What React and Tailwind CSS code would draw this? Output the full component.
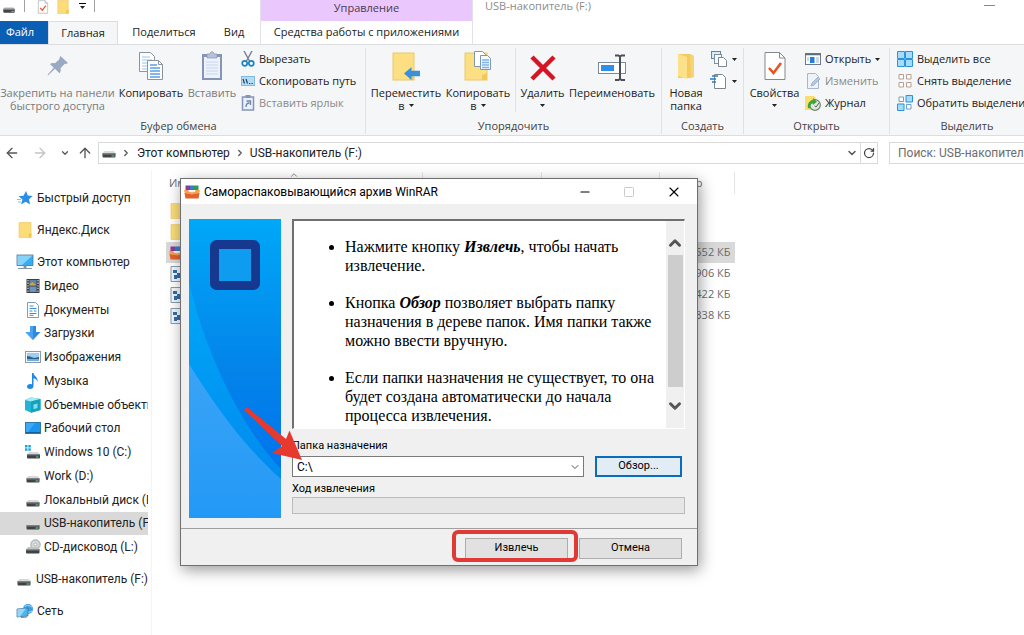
import React, { useState } from "react";
import { ArrowLeft, ArrowRight, ArrowUp, ChevronDown, ChevronRight, ChevronUp, Minus, RotateCw, Square, X } from "lucide-react";

/* ---------- icons ---------- */

const DriveIcon = ({ className = "w-4 h-4" }) => (
    <svg viewBox="0 0 16 16" className={className}>
        <path d="M3 8h10l1.500 2.500h-13z" fill="#d9d9d9" />
        <rect x="1.500" y="10" width="13" height="4.500" rx="1" fill="#3f4345" />
        <rect x="1.500" y="10" width="13" height="1.500" fill="#7c8285" />
        <rect x="10.500" y="12.500" width="3" height="1" fill="#6fd08c" />
    </svg>
);

const WindowsDriveIcon = () => (
    <svg viewBox="0 0 16 16" className="w-4 h-4">
        <g fill="#19a4e6">
            <rect x="0" y="1" width="2.500" height="2.500" /><rect x="3.300" y="1" width="2.500" height="2.500" />
            <rect x="0" y="4.300" width="2.500" height="2.500" /><rect x="3.300" y="4.300" width="2.500" height="2.500" />
        </g>
        <path d="M4 8h9l2 2.500H2z" fill="#d9d9d9" />
        <rect x="2" y="10" width="13" height="4.500" rx="1" fill="#3f4345" />
        <rect x="2" y="10" width="13" height="1.300" fill="#7c8285" />
        <rect x="11" y="12.500" width="2.500" height="1" fill="#6fd08c" />
    </svg>
);

const CdDriveIcon = () => (
    <svg viewBox="0 0 16 16" className="w-4 h-4">
        <circle cx="10.500" cy="5.500" r="4.700" fill="#d4d8d8" stroke="#8f9696" strokeWidth=".8" />
        <circle cx="10.500" cy="5.500" r="1.400" fill="#fff" stroke="#8f9696" strokeWidth=".6" />
        <path d="M3 8h10l2 2.500H1z" fill="#bfc3c3" />
        <rect x="1" y="10" width="13.500" height="4.500" rx="1" fill="#3f4345" />
        <rect x="1" y="10" width="13.500" height="1.400" fill="#8a8f91" />
    </svg>
);

const FolderIcon = ({ className = "w-4 h-4" }) => (
    <svg viewBox="0 0 16 16" className={className}>
        <path d="M2 .5h12V15.500H2z" fill="#fbdc78" stroke="#ecc65a" strokeWidth=".6" />
        <path d="M11.500 15.500V12l3-1v4.500z" fill="#f3c850" />
    </svg>
);

const StarIcon = () => (
    <svg viewBox="0 0 16 16" className="w-4 h-4">
        <path d="M9 1l1.800 4.500 4.900.5-3.700 3.300 1 5.200-4.300-2.700L4 14.500l1.500-5L1.500 6.200l5-.5z" fill="#2a8fe6" />
        <path d="M0 9.500h4M1 12h3" stroke="#7fbdf2" />
    </svg>
);

const ComputerIcon = () => (
    <svg viewBox="0 0 18 16" className="w-[18px] h-4">
        <rect x="1" y="1" width="16" height="10.500" fill="#35aef0" stroke="#52768f" strokeWidth=".8" />
        <path d="M1.400 1.400h15.200L6 11H1.400z" fill="#86d3fa" />
        <path d="M7.500 11.500h3V14h-3z" fill="#7896a8" />
        <path d="M2 14.500h14" stroke="#8797a2" />
    </svg>
);

const VideoIcon = () => (
    <svg viewBox="0 0 16 16" className="w-4 h-4">
        <rect x="1.500" y="1" width="13" height="14" fill="#3b3f45" />
        <rect x="4.500" y="2" width="7" height="5.500" fill="#5f83a8" />
        <rect x="4.500" y="8.500" width="7" height="5.500" fill="#6d94ba" />
        <path d="M4.500 6l3-2 4 3.500h-7z" fill="#c4a550" />
        <path d="M3 2v12M13 2v12" stroke="#d7dbe0" strokeWidth="1.200" strokeDasharray="1.300 1.300" />
    </svg>
);

const DocumentIcon = () => (
    <svg viewBox="0 0 16 16" className="w-4 h-4">
        <path d="M2.500.500h8l3 3v12h-11z" fill="#fff" stroke="#7f9db5" />
        <path d="M4.500 4h4M4.500 6.500h7M4.500 9h3M9 9h2.500M4.500 11.500h7M4.500 13.300h4" stroke="#3b8fd9" />
    </svg>
);

const DownloadIcon = () => (
    <svg viewBox="0 0 16 16" className="w-4 h-4">
        <path d="M5 1h6v6h4.500L8 15 .500 7H5z" fill="#2c8be0" />
        <path d="M5 1h3v14L.500 7H5z" fill="#4ba3ef" />
    </svg>
);

const ImageIcon = () => (
    <svg viewBox="0 0 16 16" className="w-4 h-4">
        <rect x=".500" y="2.500" width="15" height="11" fill="#f4f8fb" stroke="#8b9aa6" />
        <rect x="2" y="4" width="12" height="8" fill="#9fcdf0" />
        <path d="M2 7l3 .500 4 1.500 5-1v2H2z" fill="#2f618e" />
        <path d="M2 10h12v2H2z" fill="#6caedd" />
    </svg>
);

const MusicIcon = () => (
    <svg viewBox="0 0 16 16" className="w-4 h-4">
        <path d="M7 0h1.500c.5 3.500 5 4 4 9-.4-2-1.800-3.400-4-3.700V13c0 1.700-1.500 3-3.500 3S2 15 2 13.500 3.500 11 5.300 11c.7 0 1.200.1 1.700.4z" fill="#1f8ae6" />
    </svg>
);

const CubeIcon = () => (
    <svg viewBox="0 0 16 16" className="w-4 h-4">
        <path d="M0 3l6-2.500L15.500 2v11L6 15.800 0 13z" fill="#24b3d1" />
        <path d="M0 3l6-2.500L15.500 2 6 4.500z" fill="#a4ebf5" />
        <path d="M6 4.500L15.500 2v11L6 15.800z" fill="#16a0c0" />
        <path d="M8.500 7.500l4-1V11l-4 1.200z" fill="#7be1ef" />
    </svg>
);

const DesktopIcon = () => (
    <svg viewBox="0 0 16 16" className="w-4 h-4">
        <rect x=".500" y="2.500" width="15" height="11" fill="#1b95ee" stroke="#3077b0" />
        <path d="M1 3h9L3 12H1z" fill="#3cabf7" />
        <path d="M1 12.500h14" stroke="#1a5d93" />
    </svg>
);

const NetworkIcon = () => (
    <svg viewBox="0 0 18 16" className="w-[18px] h-4">
        <circle cx="12" cy="6" r="5" fill="#3a9fe0" />
        <path d="M9 4c2-3 5-1 7 0M10 8c2 2 4 1 6 0" stroke="#b9e1f8" fill="none" />
        <path d="M1 6l11-1v8L1 14z" fill="#4db3ee" stroke="#3a6f96" strokeWidth=".7" />
        <path d="M1.400 6.300L10 5.500 4 13.500l-2.600.2z" fill="#93d6fa" />
        <path d="M5 14.500l6-.5" stroke="#6f8797" />
    </svg>
);

const RarIcon = ({ className = "w-4 h-4" }) => (
    <svg viewBox="0 0 16 16" className={className}>
        <rect x="1.500" y="1.500" width="4.500" height="5.500" fill="#8d3b93" />
        <rect x="6" y="1.500" width="4" height="5.500" fill="#3978cf" />
        <rect x="10" y="1.500" width="4.500" height="5.500" fill="#2e9e4d" />
        <path d="M0 6h4c1 3 7 3 8 0h4l-1 4H1z" fill="#f6a057" />
        <path d="M4 6h8c-1 3-7 3-8 0z" fill="#fff3dc" />
        <path d="M.5 9c4 1.500 11 1.500 15 0l-1 5.500h-13z" fill="#e2622a" />
    </svg>
);

const RegIcon = () => (
    <svg viewBox="0 0 16 16" className="w-4 h-4">
        <path d="M2 .500h12v15H2z" fill="#f4f8fb" stroke="#8c9cab" />
        <path d="M4 4h4v3H4zM8 7h5v5H8zM5 9h3v4H5z" fill="#2e6fb3" />
    </svg>
);

const CheckedPage = ({ className }) => (
    <svg viewBox="0 0 24 30" className={className}>
        <path d="M2 1.500h14.500L22 7v21.500H2z" fill="#fff" stroke="#84898d" />
        <path d="M16.500 1.500V7H22" fill="none" stroke="#84898d" />
        <path d="M6 17l4.500 5L18 12" fill="none" stroke="#e8531f" strokeWidth="2.600" />
    </svg>
);

const PinIcon = () => (
    <svg viewBox="0 0 24 24" className="w-6 h-6">
        <path d="M14.500 2l7.500 7-2 1-1.200-.2-4.300 4.500c.6 2 .2 3.700-1 5L9 14.800 2.500 21l-1 .5.5-1.200 5.700-6.600L4 10c1.400-1 3-1.200 5-.7L13.600 5 13.400 4z" fill="#9aa9c2" />
    </svg>
);

const CopyIcon = () => (
    <svg viewBox="0 0 26 30" className="w-[26px] h-[30px]">
        <path d="M1.500 1.500h11l4 4v15h-15z" fill="#fff" stroke="#8a93a0" />
        <path d="M4 6h8M4 9h10M4 12h10M4 15h10M4 18h8" stroke="#9ac3ee" />
        <path d="M9.500 9.500h11l4 4v15h-15z" fill="#fff" stroke="#8a93a0" />
        <path d="M20.500 9.500v4h4" fill="none" stroke="#8a93a0" />
        <path d="M12 14h7M12 17h10M12 20h10M12 23h10M12 26h10" stroke="#5a9ee6" strokeWidth="1.400" />
    </svg>
);

const PasteIcon = () => (
    <svg viewBox="0 0 22 30" className="w-[22px] h-[30px]">
        <rect x="1" y="3" width="20" height="26" fill="#8495b8" />
        <rect x="3" y="6" width="16" height="21" fill="#eef3fb" />
        <path d="M6 3h3c0-3 4-3 4 0h3v4H6z" fill="#b8c2d6" stroke="#8495b8" strokeWidth=".7" />
        <path d="M5 11h12M5 14h12M5 17h12M5 20h12M5 23h12" stroke="#c6d5ee" />
    </svg>
);

const CutIcon = () => (
    <svg viewBox="0 0 14 16" className="w-[14px] h-4">
        <path d="M3 0l5.500 10M11 0L5.500 10" stroke="#73808f" strokeWidth="1.400" />
        <circle cx="3.700" cy="12.300" r="2.500" fill="none" stroke="#1d83c9" strokeWidth="1.700" />
        <circle cx="10.300" cy="12.300" r="2.500" fill="none" stroke="#1d83c9" strokeWidth="1.700" />
    </svg>
);

const PathIcon = () => (
    <svg viewBox="0 0 14 10" className="w-[14px] h-[10px]">
        <rect x=".5" y=".5" width="13" height="9" fill="#b5dcf5" stroke="#84bbe0" />
        <path d="M2 3l1.500 4.500M5 3l1.500 4.500M8 7.500h1.300M10.500 7.500h1.300" stroke="#23425e" strokeWidth="1.200" />
    </svg>
);

const PasteLinkIcon = () => (
    <svg viewBox="0 0 14 16" className="w-[14px] h-4">
        <rect x="1.500" y="2" width="11" height="13" fill="#eaf0fa" stroke="#8495b8" strokeWidth="1.500" />
        <rect x="4.500" y="0" width="5" height="3" fill="#8495b8" />
        <path d="M5 12c0-3 1-4 3.500-4M5.500 6h4v4" fill="none" stroke="#6f84ae" strokeWidth="1.300" />
    </svg>
);

const MoveToIcon = () => (
    <svg viewBox="0 0 28 30" className="w-7 h-[30px]">
        <rect x="1" y="2" width="21" height="27" fill="#fbdf82" stroke="#ecc96a" />
        <path d="M17 29v-5l5-1.500V29z" fill="#f1c95a" />
        <path d="M12 22.500l7.500-6.500v3.700H28v5.600h-8.500V29z" fill="#3a90dc" />
    </svg>
);

const CopyToIcon = () => (
    <svg viewBox="0 0 28 30" className="w-7 h-[30px]">
        <rect x="1" y="2" width="22" height="27" fill="#fbdf82" stroke="#ecc96a" />
        <path d="M18 29v-5l5-1.500V29z" fill="#f1c95a" />
        <path d="M10.500.500h8l3 3v12h-11z" fill="#fff" stroke="#7e97ae" />
        <path d="M16.500 4.500h7l3 3v11h-10z" fill="#f3f9ff" stroke="#7e97ae" />
        <path d="M18 9h7M18 11.500h7M18 14h7M18 16.500h7" stroke="#7fb2ea" strokeWidth="1.400" />
    </svg>
);

const DeleteIcon = () => (
    <svg viewBox="0 0 26 30" className="w-[26px] h-[30px]">
        <path d="M2 6l22 22M24 6L2 28" stroke="#d51524" strokeWidth="4.500" />
    </svg>
);

const RenameIcon = () => (
    <svg viewBox="0 0 30 30" className="w-[30px] h-[30px]">
        <rect x="1.500" y="11.500" width="27" height="11" fill="#fff" stroke="#7c8a97" />
        <rect x="4" y="14" width="13" height="6" fill="#2f8fe8" />
        <path d="M18 4.500h3.500l1.500 1 1.500-1H28M18 29h3.500l1.500-1 1.500 1H28M23 5.500v23" fill="none" stroke="#4b4f53" strokeWidth="2" />
    </svg>
);

const NewFolderIcon = () => (
    <svg viewBox="0 0 20 30" className="w-5 h-[30px]">
        <path d="M2 3h12l4 2v21l-4 1H2z" fill="#f5cb60" />
        <path d="M2 3l9 3v22l-9-3z" fill="#fde08a" />
        <path d="M14 3l4 2v20l-3 2z" fill="#f7d574" />
    </svg>
);

const NewItemIcon = () => (
    <svg viewBox="0 0 18 16" className="w-[18px] h-4">
        <rect x="1.500" y=".500" width="9" height="7" fill="#d8ebfb" stroke="#5c88ae" />
        <rect x="4.500" y="3.500" width="7" height="9" fill="#f5f9fc" stroke="#7d90a0" />
        <path d="M8.500 6.500h5l3 3v6h-8z" fill="#fff" stroke="#7d8791" />
    </svg>
);

const EasyAccessIcon = () => (
    <svg viewBox="0 0 18 16" className="w-[18px] h-4">
        <path d="M4.500 1.500h8l3 3v11h-11z" fill="#fff" stroke="#7d8791" />
        <path d="M2 3h6M0 6h6M2 9h4" stroke="#2b7cc4" strokeWidth="1.300" />
    </svg>
);

const OpenIcon = () => (
    <svg viewBox="0 0 16 16" className="w-4 h-4">
        <rect x=".500" y="2.500" width="15" height="11" fill="#fff" stroke="#6e7b86" />
        <path d="M.500 3.500h15" stroke="#5c6c7a" strokeWidth="1.500" />
        <rect x="5" y="6" width="4.500" height="6" fill="#1f7fdb" />
        <path d="M11 7h3M11 9h3M11 11h3M2 7h2M2 9h2" stroke="#9eb4c6" />
    </svg>
);

const EditIcon = () => (
    <svg viewBox="0 0 16 16" className="w-4 h-4">
        <path d="M2.500.500h8l3 3v12h-11z" fill="#eef3fa" stroke="#a8b6cc" />
        <path d="M6 13l1-3 6-6 2 2-6 6z" fill="#b8c7df" stroke="#94a6c6" strokeWidth=".7" />
    </svg>
);

const HistoryIcon = () => (
    <svg viewBox="0 0 16 16" className="w-4 h-4">
        <path d="M0 1h9l2 2v12H0z" fill="#fadf70" />
        <circle cx="10" cy="10" r="5.300" fill="#dfeadf" stroke="#72856f" strokeWidth="1.200" />
        <path d="M9.500 11l1.500 1 3-4" stroke="#55605a" fill="none" />
        <path d="M3 13c-1-5 2-7.500 5-7.500V3l4 3.700-4 3.300V8.500c-2 0-3 1.500-2.500 5z" fill="#36a93c" />
    </svg>
);

const SelectAllIcon = () => (
    <svg viewBox="0 0 16 16" className="w-4 h-4">
        <path d="M.5.500h7v7H.5zM8.500.500h7v7h-7zM.5 8.500h7v7H.5zM8.500 8.500h7v7h-7z" fill="#a6dbfb" stroke="#2b93d9" />
    </svg>
);

const SelectNoneIcon = () => (
    <svg viewBox="0 0 16 16" className="w-4 h-4">
        <path d="M2 1.500h4.500V6H2zM9.500 1.500H14V6H9.500zM2 9.500h4.500V14H2zM9.500 9.500H14V14H9.500z" fill="#fff" stroke="#b79e92" />
    </svg>
);

const SelectInvertIcon = () => (
    <svg viewBox="0 0 16 16" className="w-4 h-4">
        <path d="M9 .500h6.500v6.500H9zM.5 9h6.500v6.500H.5z" fill="#a6dbfb" stroke="#2b93d9" />
        <path d="M2 2h4.500v4.500H2zM9.500 9.500H14V14H9.500z" fill="#fff" stroke="#6f9fc4" />
    </svg>
);

const Caret = () => (
    <svg viewBox="0 0 5 3" className="inline-block w-[5px] h-[3px]"><path d="M0 0h5L2.500 3z" fill="#222" /></svg>
);

/* ---------- ribbon ---------- */

const Group = ({ title, className, children }) => (
    <section className={`flex shrink-0 flex-col border-r border-[#e0e1e2] ${className}`}>
        <div className="flex h-[70px] items-start">{children}</div>
        <h2 className="text-center leading-4 text-[#444]">{title}</h2>
    </section>
);

const BigButton = ({ icon, label, line2, caret, disabled, className }) => (
    <button disabled={disabled} className={`flex shrink-0 flex-col items-center leading-[13px] whitespace-nowrap ${disabled ? "text-[#7a7a7a]" : "text-[#222]"} ${className}`}>
        <span className="mb-[2px] flex h-9 items-center">{icon}</span>
        <span>{label}</span>
        <span className="flex h-[13px] items-center gap-1">{line2}{caret && <Caret />}</span>
    </button>
);

const SmallButton = ({ icon, label, caret, disabled }) => (
    <button disabled={disabled} className={`flex h-[22px] items-center gap-1 whitespace-nowrap ${disabled ? "text-[#8a8a8a]" : "text-[#222]"}`}>
        {icon}
        {label && <span>{label}</span>}
        {caret && <Caret />}
    </button>
);

const Ribbon = () => (
    <div className="flex overflow-hidden border-y border-[#dcdddf] bg-[#f5f6f7] pt-[3px] pb-[1px] font-['Open_Sans','Noto_Sans',sans-serif] text-[11px]">
        <Group title="Буфер обмена" className="w-[366px] pr-2">
            <BigButton className="w-[115px]" icon={<PinIcon />} label="Закрепить на панели" line2="быстрого доступа" disabled />
            <BigButton className="w-[72px]" icon={<CopyIcon />} label="Копировать" />
            <BigButton className="w-[50px]" icon={<PasteIcon />} label="Вставить" disabled />
            <div className="flex flex-col pl-1">
                <SmallButton icon={<CutIcon />} label="Вырезать" />
                <SmallButton icon={<PathIcon />} label="Скопировать путь" />
                <SmallButton icon={<PasteLinkIcon />} label="Вставить ярлык" disabled />
            </div>
        </Group>
        <Group title="Упорядочить" className="w-[296px]">
            <BigButton className="w-20" icon={<MoveToIcon />} label="Переместить" line2="в" caret />
            <BigButton className="w-[64px]" icon={<CopyToIcon />} label="Копировать" line2="в" caret />
            <div className="ml-[5px] h-16 border-l border-[#e0e1e2]" />
            <BigButton className="w-[53px]" icon={<DeleteIcon />} label="Удалить" caret />
            <BigButton className="w-[86px]" icon={<RenameIcon />} label="Переименовать" />
        </Group>
        <Group title="Создать" className="w-[82px]">
            <BigButton className="w-12" icon={<NewFolderIcon />} label="Новая" line2="папка" />
            <div className="flex flex-col">
                <SmallButton icon={<NewItemIcon />} caret />
                <SmallButton icon={<EasyAccessIcon />} caret />
            </div>
        </Group>
        <Group title="Открыть" className="w-[146px]">
            <BigButton className="w-[61px]" icon={<CheckedPage className="w-6 h-[30px]" />} label="Свойства" caret />
            <div className="flex flex-col">
                <SmallButton icon={<OpenIcon />} label="Открыть" caret />
                <SmallButton icon={<EditIcon />} label="Изменить" disabled />
                <SmallButton icon={<HistoryIcon />} label="Журнал" />
            </div>
        </Group>
        <Group title="Выделить" className="w-[148px] pl-[7px]">
            <div className="flex flex-col">
                <SmallButton icon={<SelectAllIcon />} label="Выделить все" />
                <SmallButton icon={<SelectNoneIcon />} label="Снять выделение" />
                <SmallButton icon={<SelectInvertIcon />} label="Обратить выделение" />
            </div>
        </Group>
    </div>
);

const TitleAndTabs = () => (
    <header className="flex h-11 items-stretch overflow-hidden font-['Open_Sans','Noto_Sans',sans-serif] text-[11px]">
        <div className="flex w-[260px] shrink-0 flex-col">
            <div className="flex h-[21px] items-start gap-1 overflow-hidden">
                <DriveIcon className="ml-[1px] w-4 h-[14px]" />
                <span className="ml-[3px] h-3 border-l border-[#a0a0a0]" />
                <CheckedPage className="ml-[6px] w-4 h-[14px]" />
                <FolderIcon className="w-4 h-[14px]" />
                <button aria-label="Настройка панели" className="ml-1 flex h-3 flex-col items-center justify-center gap-[2px]">
                    <span className="w-[7px] border-t border-black" />
                    <Caret />
                </button>
                <span className="ml-1 h-3 border-l border-[#a0a0a0]" />
            </div>
            <nav className="flex h-[23px] items-stretch text-[#222]">
                <button className="w-12 bg-[#0a5fb4] pr-2 text-white">Файл</button>
                <button className="w-[70px] border-x border-t border-[#dcdddf] bg-[#f5f6f7]">Главная</button>
                <button className="w-[92px]">Поделиться</button>
                <button className="w-12">Вид</button>
            </nav>
        </div>
        <div className="flex w-[213px] shrink-0 flex-col border-x border-[#e6e0ea] text-[#222]">
            <div className="h-[21px] bg-[#eac8fd] text-center leading-4 text-[#4a3a52]">Управление</div>
            <button className="h-[23px] whitespace-nowrap">Средства работы с приложениями</button>
        </div>
        <div className="flex flex-1 items-start justify-between pl-3">
            <h1 className="leading-3 text-[#8b8b8b]">USB-накопитель (F:)</h1>
            <button aria-label="Свернуть" className="mr-[29px] pt-[5px]"><span className="block w-[11px] border-t border-[#888]" /></button>
        </div>
    </header>
);

const AddressBar = () => (
    <div className="flex h-[34px] items-center text-[#222]">
        <div className="flex w-[98px] shrink-0 items-center pl-1 text-[#555]">
            <button aria-label="Назад" className="w-7"><ArrowLeft size={16} /></button>
            <button aria-label="Вперед" className="w-7 text-[#c4c4c4]"><ArrowRight size={16} /></button>
            <button aria-label="Последние" className="w-[17px]"><ChevronDown size={10} strokeWidth={3} /></button>
            <button aria-label="Вверх"><ArrowUp size={16} /></button>
        </div>
        <div className="flex h-[22px] flex-1 items-center border border-[#d9d9d9]">
            <DriveIcon className="ml-[2px] mb-1 w-4 h-4" />
            <ChevronRight size={10} strokeWidth={3} className="mx-1 text-[#555]" />
            <a href="#pc" className="ml-[2px]">Этот компьютер</a>
            <ChevronRight size={10} strokeWidth={3} className="mx-[5px] text-[#555]" />
            <a href="#usb">USB-накопитель (F:)</a>
            <button aria-label="Журнал адресов" className="mr-[2px] ml-auto text-[#555]"><ChevronDown size={12} strokeWidth={3} /></button>
            <button aria-label="Обновить" className="flex h-full items-center border-l border-[#d9d9d9] px-[2px] text-[#444]"><RotateCw size={12} strokeWidth={2.500} /></button>
        </div>
        <input
            aria-label="Поиск"
            placeholder="Поиск: USB-накопитель (F:)"
            className="ml-[11px] h-[22px] w-[135px] shrink-0 border border-r-0 border-[#d9d9d9] pl-2 outline-none placeholder:text-[#6d6d6d]"
        />
    </div>
);

/* ---------- sidebar ---------- */

const pcItems = [
    { label: "Видео", icon: <VideoIcon /> },
    { label: "Документы", icon: <DocumentIcon /> },
    { label: "Загрузки", icon: <DownloadIcon /> },
    { label: "Изображения", icon: <ImageIcon /> },
    { label: "Музыка", icon: <MusicIcon /> },
    { label: "Объемные объекты", icon: <CubeIcon /> },
    { label: "Рабочий стол", icon: <DesktopIcon /> },
    { label: "Windows 10 (C:)", icon: <WindowsDriveIcon /> },
    { label: "Work (D:)", icon: <DriveIcon /> },
    { label: "Локальный диск (E:)", icon: <DriveIcon /> },
    { label: "USB-накопитель (F:)", icon: <DriveIcon />, active: true },
    { label: "CD-дисковод (L:)", icon: <CdDriveIcon /> },
];

const RootItem = ({ icon, label }) => (
    <a href="#folder" className="flex h-6 items-center gap-[3px] pl-4 whitespace-nowrap">
        <span className="flex w-[18px] justify-center">{icon}</span>{label}
    </a>
);

const Sidebar = () => (
    <aside className="w-[152px] shrink-0 border-r border-[#f4f4f4] pt-4 pr-[3px] text-[#222]">
        <div className="flex flex-col gap-2">
            <RootItem icon={<StarIcon />} label="Быстрый доступ" />
            <RootItem icon={<FolderIcon />} label="Яндекс.Диск" />
            <div>
                <RootItem icon={<ComputerIcon />} label="Этот компьютер" />
                <ul className="grid h-[285px] auto-rows-fr">
                    {pcItems.map(it => (
                        <li key={it.label} className={`overflow-hidden ${it.active ? "bg-[#d9d9d9]" : ""}`}>
                            <a href="#folder" className="flex h-full items-center gap-[3px] pl-[25px] whitespace-nowrap">
                                <span className="shrink-0">{it.icon}</span>{it.label}
                            </a>
                        </li>
                    ))}
                </ul>
            </div>
            <RootItem icon={<DriveIcon />} label="USB-накопитель (F:)" />
            <RootItem icon={<NetworkIcon />} label="Сеть" />
        </div>
    </aside>
);

/* ---------- file list ---------- */

const files = [
    { icon: <FolderIcon />, size: "" },
    { icon: <FolderIcon />, size: "" },
    { icon: <RarIcon />, size: "552 КБ", active: true },
    { icon: <RegIcon />, size: "906 КБ" },
    { icon: <RegIcon />, size: "422 КБ" },
    { icon: <RegIcon />, size: "338 КБ" },
];

const FileList = () => (
    <main className="flex-1 overflow-hidden pl-[14px]">
        <div className="flex h-[2px] w-[255px] items-start justify-center text-[#777]"><ChevronUp size={10} className="shrink-0" /></div>
        <table className="w-[569px] table-fixed border-collapse font-['Open_Sans','Noto_Sans',sans-serif] text-[11px] text-[#6d6d6d]">
            <thead>
                <tr className="h-[22px] text-left">
                    <th className="w-[256px] border-r border-[#e5e5e5] pl-[3px] font-normal">Имя</th>
                    <th className="w-[119px] border-r border-[#e5e5e5] pl-2 font-normal">Дата</th>
                    <th className="w-[118px] border-r border-[#e5e5e5] pl-2 font-normal">Тип</th>
                    <th className="border-r border-[#e5e5e5] pl-1 font-normal">Размер</th>
                </tr>
                <tr className="h-[6px]"><td /></tr>
            </thead>
            <tbody>
                {files.map((f, i) => (
                    <tr key={i} className={`h-[21px] ${f.active ? "bg-[#d9d9d9]" : ""}`}>
                        <td className="pl-[3px]">{f.icon}</td>
                        <td />
                        <td />
                        <td className="pr-1 text-right">{f.size}</td>
                    </tr>
                ))}
            </tbody>
        </table>
    </main>
);

/* ---------- WinRAR dialog ---------- */

const Banner = () => (
    <svg viewBox="0 0 92 299" className="h-[299px] w-[92px] shrink-0">
        <defs>
            <linearGradient id="sky" x1="0" y1="0" x2="0" y2="1">
                <stop offset="0" stopColor="#00a8f8" /><stop offset="1" stopColor="#0088ee" />
            </linearGradient>
            <linearGradient id="deep" x1="0" y1="0" x2="0" y2="1">
                <stop offset="0" stopColor="#00a8f8" /><stop offset=".5" stopColor="#0384ea" /><stop offset="1" stopColor="#006cee" />
            </linearGradient>
            <linearGradient id="low" x1="0" y1="0" x2="0" y2="1">
                <stop offset="0" stopColor="#3aa4f6" /><stop offset="1" stopColor="#2399f6" />
            </linearGradient>
        </defs>
        <rect width="92" height="299" fill="url(#deep)" />
        <path d="M0 63C13 120 45 200 92 250v30H0z" fill="url(#sky)" />
        <path d="M0 145C22 180 52 225 92 260v39H0z" fill="url(#low)" />
        <rect x="25.500" y="25.500" width="41" height="41" rx="2" fill="#0d9cf0" stroke="#16388f" strokeWidth="9" />
    </svg>
);

const WinButton = ({ children, className }) => (
    <button className={`h-[21px] text-[11px] text-black ${className}`}>{children}</button>
);

const Dialog = () => {
    const [folder, setFolder] = useState("C:\\");

    return (
        <div role="dialog" aria-label="WinRAR" className="absolute top-[178px] left-[180px] w-[518px] border border-[#6f6f6f] bg-[#f0f0f0] text-black shadow-[2px_4px_14px_rgba(0,0,0,0.4)]">
            <div className="flex h-[25px] items-center bg-white pl-[3px]">
                <RarIcon />
                <span className="ml-1">Самораспаковывающийся архив WinRAR</span>
                <div className="mr-[15px] ml-auto flex items-center gap-[31px]">
                    <button aria-label="Свернуть"><Minus size={14} strokeWidth={1.800} /></button>
                    <button aria-label="Развернуть" disabled className="text-[#c4c4c4]"><Square size={12} strokeWidth={1.800} /></button>
                    <button aria-label="Закрыть"><X size={16} strokeWidth={1.600} /></button>
                </div>
            </div>

            <div className="flex gap-[11px] pt-[15px] pr-[12px] pb-[10px] pl-2">
                <Banner />
                <div className="flex flex-1 flex-col">
                    <div className="flex h-[210px] overflow-hidden border-t-2 border-l-2 border-t-[#6f6f6f] border-l-[#6f6f6f] border-r border-b border-r-white border-b-white bg-white">
                        <ul className="flex flex-1 list-disc flex-col gap-[18px] pt-4 pl-[51px] font-['Liberation_Serif',serif] text-[16px] leading-[19px]">
                            <li>Нажмите кнопку <b><i>Извлечь</i></b>, чтобы начать<br />извлечение.</li>
                            <li>Кнопка <b><i>Обзор</i></b> позволяет выбрать папку<br />назначения в дереве папок. Имя папки также<br />можно ввести вручную.</li>
                            <li>Если папки назначения не существует, то она<br />будет создана автоматически до начала<br />процесса извлечения.</li>
                        </ul>
                        <div className="flex w-[18px] flex-col items-center bg-[#f0f0f0] pt-[13px] text-[#555]">
                            <ChevronUp size={18} strokeWidth={4} />
                            <div className="mt-[3px] h-[132px] w-[15px] bg-[#cdcdcd]" />
                            <ChevronDown size={18} strokeWidth={4} className="mt-[10px]" />
                        </div>
                    </div>
                    <label htmlFor="folder" className="mt-[9px] mb-[2px] text-[11px] leading-4">Папка назначения</label>
                    <div className="flex gap-[11px] pr-[3px]">
                        <div className="relative flex-1">
                            <select
                                id="folder"
                                value={folder}
                                onChange={e => setFolder(e.target.value)}
                                className="block h-[21px] w-full appearance-none border border-[#7a7a7a] bg-white pl-1 text-[12px] outline-none"
                            >
                                <option>C:\</option>
                            </select>
                            <ChevronDown size={12} className="pointer-events-none absolute top-[5px] right-[3px] text-[#555]" />
                        </div>
                        <WinButton className="w-[87px] border-2 border-[#0b6cbd] bg-[#e1ecf5]">Обзор...</WinButton>
                    </div>
                    <span id="progress" className="mt-1 text-[11px] leading-4">Ход извлечения</span>
                    <div role="progressbar" aria-labelledby="progress" className="h-[17px] border border-[#bcbcbc] bg-[#e6e6e6]" />
                </div>
            </div>

            <div className="flex justify-end gap-[11px] border-t border-[#a0a0a0] pt-[9px] pr-[15px] pb-[6px]">
                <WinButton className="w-[103px] border border-[#adadad] bg-[#e1e1e1]">Извлечь</WinButton>
                <WinButton className="w-[103px] border border-[#adadad] bg-[#e1e1e1]">Отмена</WinButton>
            </div>

            {/* marks drawn over the window */}
            <svg viewBox="0 0 64 60" className="pointer-events-none absolute top-[225px] left-[61px] h-[60px] w-16">
                <path d="M5 3L44 35l3.500-8.500L60 56 30 49l10-7L2 6z" fill="#e8392f" />
            </svg>
            <div className="pointer-events-none absolute right-[119px] bottom-[3px] h-8 w-[126px] rounded-md border-4 border-[#e03a34]" />
        </div>
    );
};

export default function App() {
    return (
        <div className="relative flex min-h-screen flex-col overflow-hidden bg-white font-['Roboto','Noto_Sans',sans-serif] text-[12px]">
            <TitleAndTabs />
            <Ribbon />
            <AddressBar />
            <div className="flex flex-1">
                <Sidebar />
                <FileList />
            </div>
            <Dialog />
        </div>
    );
}
